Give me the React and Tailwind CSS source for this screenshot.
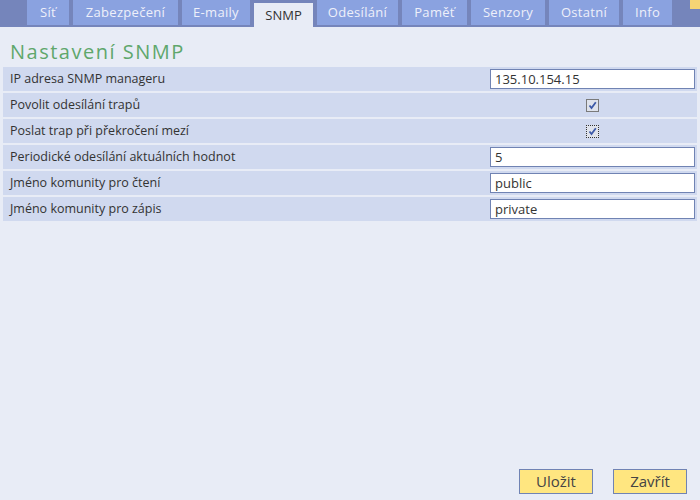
const tabs = [
  { label: "Síť", w: "w-[42px]" },
  { label: "Zabezpečení", w: "w-[105px]" },
  { label: "E-maily", w: "w-[68px]" },
  { label: "SNMP", w: "w-[59px]", active: true },
  { label: "Odesílání", w: "w-[81px]" },
  { label: "Paměť", w: "w-[65px]" },
  { label: "Senzory", w: "w-[74px]" },
  { label: "Ostatní", w: "w-[70px]" },
  { label: "Info", w: "w-[49px]" },
];

const rows = [
  { label: "IP adresa SNMP manageru", type: "text", value: "135.10.154.15" },
  { label: "Povolit odesílání trapů", type: "check" },
  { label: "Poslat trap při překročení mezí", type: "check", focus: true },
  { label: "Periodické odesílání aktuálních hodnot", type: "text", value: "5" },
  { label: "Jméno komunity pro čtení", type: "text", value: "public" },
  { label: "Jméno komunity pro zápis", type: "text", value: "private" },
];

function Check({ focus }) {
  return (
    <span className={`w-[13px] h-[13px] border bg-[#dfe3ec] flex items-center justify-center ${focus ? "border-dotted border-[#333]" : "border-[#7a7a7a]"}`}>
      <svg width="9" height="9" viewBox="0 0 9 9">
        <path d="M1.5 4.5 L3.5 7 L7.8 1.2" fill="none" stroke="#3d5aa8" strokeWidth="1.8" />
      </svg>
    </span>
  );
}

export default function App() {
  return (
    <div className="w-[700px] h-[500px] bg-[#e8ecf6] flex flex-col text-[#333]" style={{ fontFamily: '"Open Sans", "Liberation Sans", sans-serif' }}>
      <div className="h-[27px] bg-[#7585bb] flex pl-[27px] gap-[4px] relative">
        {tabs.map(t => (
          <div
            key={t.label}
            className={`${t.w} flex items-center justify-center text-[13px] ${t.active ? "mt-[3px] h-[25px] bg-[#e8ecf6] text-[#333]" : "h-[25px] bg-[#8aa2e0] text-[#eef0fa] tracking-[0.3px]"}`}
          >
            {t.label}
          </div>
        ))}
        <div className="absolute right-0 top-0 w-[10px] h-[9px] bg-[#f5d474]" />
      </div>

      <h1 className="mt-[12px] ml-[10px] text-[20px] leading-[26px] tracking-[1.5px] text-[#5fa76c]">Nastavení SNMP</h1>

      <div className="mt-[2px] mx-[3px] flex flex-col gap-[2px]">
        {rows.map(r => (
          <div key={r.label} className="h-[24px] bg-[#d0d9ef] flex items-center pl-[7px] pr-[2px] text-[12.5px]">
            <span className="flex-1">{r.label}</span>
            <div className="w-[205px] flex justify-center">
              {r.type === "text" ? (
                <div className="w-[205px] h-[20px] bg-white border border-[#7083b3] px-[4px] text-[13px] leading-[18px] text-[#333]">{r.value}</div>
              ) : (
                <Check focus={r.focus} />
              )}
            </div>
          </div>
        ))}
      </div>

      <div className="flex-1" />

      <div className="flex justify-end gap-[20px] pr-[13px] pb-[6px]">
        <button className="w-[74px] h-[25px] bg-[#ffe680] border border-[#7083b3] text-[15px] text-[#444]">Uložit</button>
        <button className="w-[74px] h-[25px] bg-[#ffe680] border border-[#7083b3] text-[15px] text-[#444]">Zavřít</button>
      </div>
    </div>
  );
}
